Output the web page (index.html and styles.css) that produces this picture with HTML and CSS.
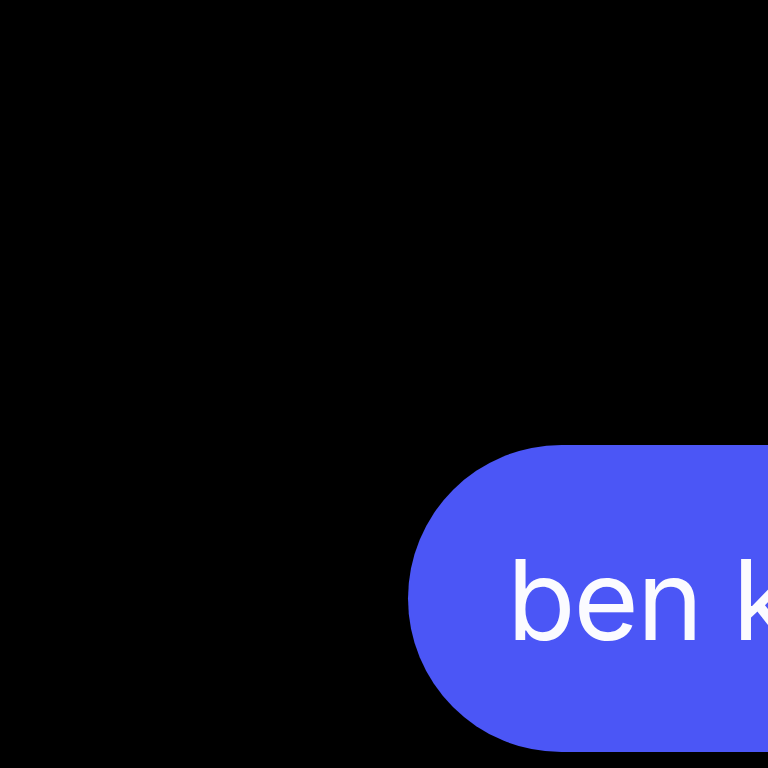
FILE: index.html
```html
<!DOCTYPE html>
<html>
<head>
<meta charset="utf-8">
<link rel="stylesheet" href="styles.css">
</head>
<body>
<div class="stage">
  <div class="pill"><span class="label">ben kenobi</span></div>
</div>
</body>
</html>
```
FILE: styles.css
```css
html, body {
  margin: 0;
  padding: 0;
  background: #000;
  width: 768px;
  height: 768px;
  overflow: hidden;
}
.stage {
  padding: 445px 0 0 408px;
  display: flex;
}
.pill {
  flex: none;
  height: 307px;
  border-radius: 154px 0 0 154px;
  background: #4b56f6;
  display: flex;
  align-items: center;
  padding: 0 120px 0 99px;
  white-space: nowrap;
}
.label {
  font-family: Inter, "Noto Sans", sans-serif;
  font-size: 112px;
  color: #fbfbff;
  font-weight: 400;
  letter-spacing: -2px;
  word-spacing: 2px;
}
```
